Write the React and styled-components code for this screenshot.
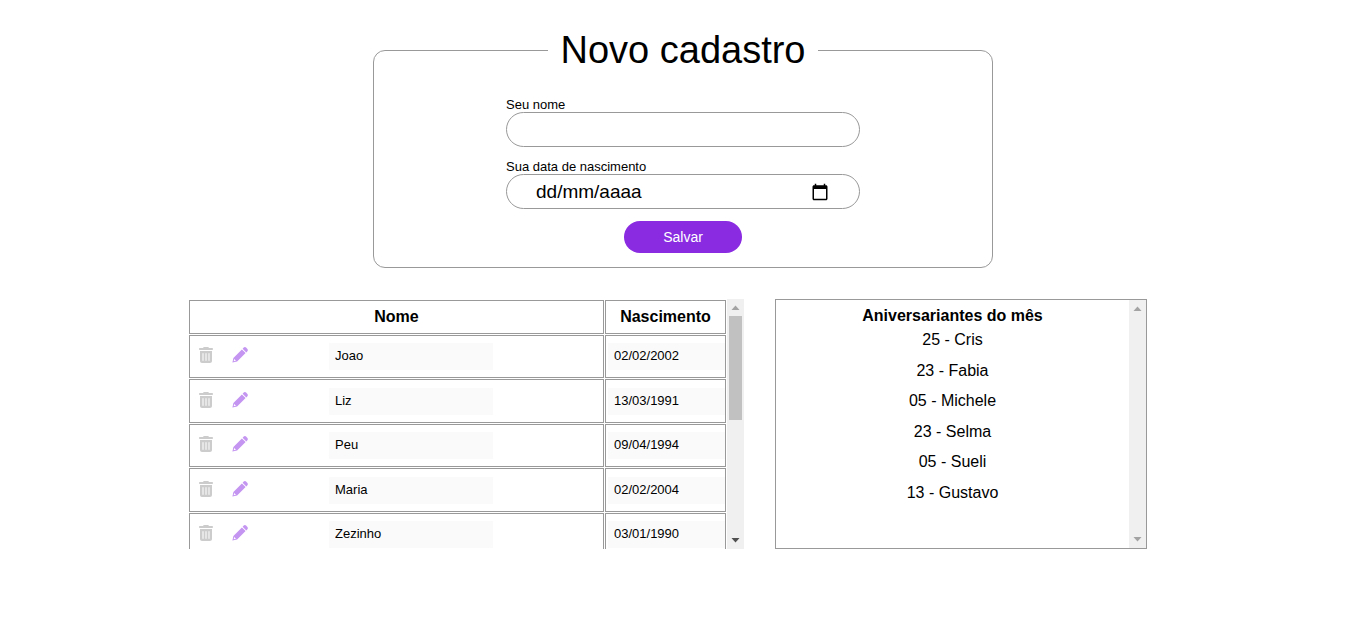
import React from "react";
import styled, { createGlobalStyle } from "styled-components";
import { FaTrashCan } from "react-icons/fa6";

const GlobalStyle = createGlobalStyle`
  * {
    box-sizing: border-box;
    margin: 0;
    padding: 0;
  }
  body {
    background: #fff;
    color: #000;
    font-family: "Liberation Sans", Arial, sans-serif;
    font-size: 16px;
  }
  button, input {
    font-family: inherit;
  }
`;

const Page = styled.main`
  display: flex;
  flex-direction: column;
  align-items: center;
  gap: 31px;
  padding: 28px 16px 32px;
`;

const Fieldset = styled.fieldset`
  width: 100%;
  max-width: 620px;
  padding: 25px 16px 14px;
  border: 1px solid #999;
  border-radius: 12px;
`;

const Legend = styled.legend`
  margin: 0 auto;
  padding: 0 12px;
  font-size: 38px;
  line-height: 44px;
`;

const Form = styled.form`
  display: flex;
  flex-direction: column;
  align-items: center;
  gap: 12px;
`;

const Field = styled.div`
  display: flex;
  flex-direction: column;
  width: 100%;
  max-width: 354px;
`;

const Label = styled.label`
  font-size: 13px;
  line-height: 15px;
`;

const InputShell = styled.div`
  display: flex;
  align-items: center;
  height: 35px;
  padding: 0 30px 0 28px;
  border: 1px solid #999;
  border-radius: 18px;
`;

const TextInput = styled.input`
  flex: 1;
  min-width: 0;
  border: 0;
  outline: 0;
  background: transparent;
  font-size: 19px;
  line-height: 24px;
  padding: 0 1px;
  &::placeholder {
    color: #000;
    opacity: 1;
  }
`;

const IconButton = styled.button`
  display: flex;
  align-items: center;
  justify-content: center;
  border: 0;
  background: transparent;
  color: ${(p) => p.$color};
  cursor: pointer;
`;

const SaveButton = styled.button`
  width: 118px;
  height: 32px;
  border: 0;
  border-radius: 16px;
  background: blueviolet;
  color: #fff;
  font-size: 14px;
  cursor: pointer;
`;

const Board = styled.section`
  display: grid;
  grid-template-columns: minmax(0, 556fr) minmax(0, 372fr);
  gap: 31px;
  width: 100%;
  max-width: 990px;
  padding-right: 31px;
`;

const Panel = styled.div`
  display: flex;
  height: 250px;
  border: ${(p) => (p.$framed ? "1px solid #999" : "0")};
`;

const Scroller = styled.div`
  flex: 1;
  min-width: 0;
  overflow: auto;
  scrollbar-width: none;
`;

const Bar = styled.div`
  display: flex;
  flex-direction: column;
  align-items: center;
  justify-content: space-between;
  width: 17px;
  background: #f0f0f0;
`;

const Track = styled.div`
  flex: 1;
  width: 13px;
`;

const Thumb = styled.div`
  height: 48%;
  background: #c1c1c1;
`;

const Arrow = styled.svg`
  display: block;
  width: 17px;
  height: 17px;
  fill: ${(p) => (p.$active ? "#505050" : "#a3a3a3")};
`;

const Table = styled.table`
  width: 100%;
  table-layout: fixed;
  border-collapse: separate;
  border-spacing: 1px;
`;

const HeadCell = styled.th`
  width: ${(p) => p.$width || "auto"};
  height: 34px;
  border: 1px solid #999;
  font-size: 16px;
`;

const Row = styled.tr`
  height: 43px;
  &:nth-child(even) {
    height: 44px;
  }
`;

const Cell = styled.td`
  padding-left: ${(p) => (p.$date ? "2px" : "8px")};
  border: 1px solid #999;
`;

const NameRow = styled.div`
  display: flex;
  align-items: center;
`;

const Actions = styled.div`
  display: flex;
  gap: 18px;
  margin-right: 20%;
  padding-bottom: 3px;
`;

const CellInput = styled.input`
  display: block;
  width: ${(p) => p.$width};
  height: 27px;
  padding: 0 6px 2px;
  border: 0;
  background: #fafafa;
  color: #000;
  font-size: 13px;
`;

const Birthdays = styled.div`
  display: flex;
  flex-direction: column;
  padding-top: 7px;
  text-align: center;
`;

const BirthdayTitle = styled.h2`
  font-size: 16px;
  line-height: 18px;
`;

const BirthdayList = styled.ul`
  display: grid;
  grid-auto-rows: 1fr;
  align-items: center;
  height: 183px;
  list-style: none;
`;

const Birthday = styled.li`
  line-height: 24px;
`;

const people = [
  { name: "Joao", date: "02/02/2002" },
  { name: "Liz", date: "13/03/1991" },
  { name: "Peu", date: "09/04/1994" },
  { name: "Maria", date: "02/02/2004" },
  { name: "Zezinho", date: "03/01/1990" },
];

const birthdays = [
  "25 - Cris",
  "23 - Fabia",
  "05 - Michele",
  "23 - Selma",
  "05 - Sueli",
  "13 - Gustavo",
];

function CalendarIcon() {
  return (
    <svg width="18" height="18" viewBox="0 0 24 24" fill="currentColor" aria-hidden="true">
      <path d="M20 3h-1V1h-2v2H7V1H5v2H4c-1.1 0-2 .9-2 2v16c0 1.1.9 2 2 2h16c1.1 0 2-.9 2-2V5c0-1.1-.9-2-2-2zm0 18H4V8h16v13z" />
    </svg>
  );
}

function PencilIcon() {
  return (
    <svg width="16" height="16" viewBox="0 0 16 16" fill="currentColor" aria-hidden="true">
      <path
        fillRule="evenodd"
        d="M.4 15.600L1.400 10.900L9.900 2.400L13.600 6.100L5.100 14.600ZM2.200 12L1.700 14.300L4 13.800Z"
      />
      <path d="M10.600 1.700L11.500.8a2 2 0 0 1 2.800 0l.9.9a2 2 0 0 1 0 2.800L14.300 5.400Z" />
    </svg>
  );
}

function ScrollBar({ scrollable }) {
  return (
    <Bar aria-hidden="true">
      <Arrow viewBox="0 0 17 17">
        <path d="M4.500 11L8.500 6.600L12.500 11z" />
      </Arrow>
      <Track>{scrollable && <Thumb />}</Track>
      <Arrow viewBox="0 0 17 17" $active={scrollable}>
        <path d="M4.500 6L8.500 10.400L12.500 6z" />
      </Arrow>
    </Bar>
  );
}

function PersonRow({ name, date }) {
  return (
    <Row>
      <Cell>
        <NameRow>
          <Actions>
            <IconButton type="button" $color="#ccc" aria-label={`Excluir ${name}`}>
              <FaTrashCan size={16} />
            </IconButton>
            <IconButton type="button" $color="#c495f1" aria-label={`Editar ${name}`}>
              <PencilIcon />
            </IconButton>
          </Actions>
          <CellInput $width="164px" defaultValue={name} aria-label="Nome" />
        </NameRow>
      </Cell>
      <Cell $date>
        <CellInput $width="100%" defaultValue={date} aria-label="Nascimento" />
      </Cell>
    </Row>
  );
}

export default function App() {
  return (
    <>
      <GlobalStyle />
      <Page>
        <Fieldset>
          <Legend>Novo cadastro</Legend>
          <Form onSubmit={(e) => e.preventDefault()}>
            <Field>
              <Label htmlFor="nome">Seu nome</Label>
              <InputShell>
                <TextInput id="nome" type="text" />
              </InputShell>
            </Field>
            <Field>
              <Label htmlFor="nascimento">Sua data de nascimento</Label>
              <InputShell>
                <TextInput id="nascimento" type="text" inputMode="numeric" placeholder="dd/mm/aaaa" />
                <IconButton type="button" $color="#000" aria-label="Abrir calendário">
                  <CalendarIcon />
                </IconButton>
              </InputShell>
            </Field>
            <SaveButton type="submit">Salvar</SaveButton>
          </Form>
        </Fieldset>
        <Board>
          <Panel>
            <Scroller>
              <Table>
                <thead>
                  <tr>
                    <HeadCell scope="col">Nome</HeadCell>
                    <HeadCell scope="col" $width="121px">Nascimento</HeadCell>
                  </tr>
                </thead>
                <tbody>
                  {people.map((person) => (
                    <PersonRow key={person.name} {...person} />
                  ))}
                </tbody>
              </Table>
            </Scroller>
            <ScrollBar scrollable />
          </Panel>
          <Panel $framed>
            <Scroller>
              <Birthdays>
                <BirthdayTitle>Aniversariantes do mês</BirthdayTitle>
                <BirthdayList>
                  {birthdays.map((item) => (
                    <Birthday key={item}>{item}</Birthday>
                  ))}
                </BirthdayList>
              </Birthdays>
            </Scroller>
            <ScrollBar />
          </Panel>
        </Board>
      </Page>
    </>
  );
}
